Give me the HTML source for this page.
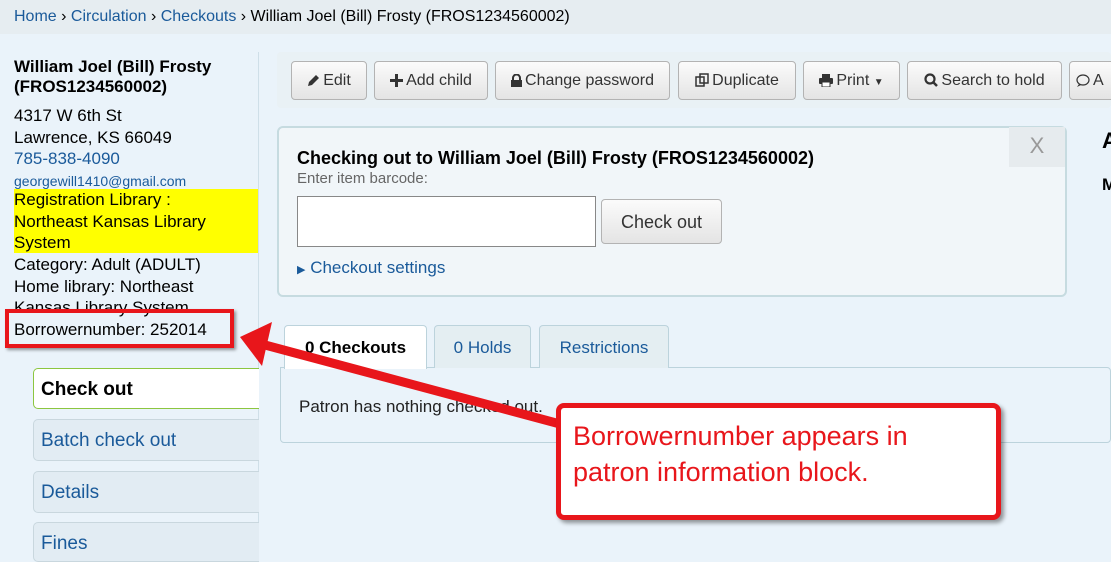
<!DOCTYPE html>
<html><head><style>
*{box-sizing:border-box;margin:0;padding:0}
body{width:1111px;height:554px;overflow:hidden;background:#eaf3fa;font-family:"Liberation Sans",Arial,sans-serif;position:relative;color:#000}
.a{position:absolute}
a,.lnk{color:#1a5a9a;text-decoration:none}
.bc{left:0;top:0;width:1111px;height:34px;background:#e6edf1;font-size:16px;padding:8px 14px;white-space:nowrap}
.pi{left:14px;font-size:17px;line-height:21.5px}
.btn{position:absolute;top:61px;height:39px;border:1px solid #b3b3b3;border-radius:4px;background:linear-gradient(#fbfbfb,#e4e4e4);font-size:16px;color:#333;padding:10px 0 0;text-align:center;white-space:nowrap}
.btn svg{vertical-align:-2px;margin-right:3px}
.tab{position:absolute;top:325px;height:43px;border:1px solid #bcd3dc;border-bottom:none;border-radius:4px 4px 0 0;background:#e4eef2;font-size:17px;padding:12px 0 0;text-align:center}
.nav{position:absolute;left:33px;width:226px;height:42px;border:1px solid #c9d7de;border-right:none;border-radius:5px 0 0 5px;background:#e2ecf3;font-size:19px;padding:10px 7px;color:#1a5a9a}
</style></head><body>
<div class="a bc"><a>Home</a> › <a>Circulation</a> › <a>Checkouts</a> › William Joel (Bill) Frosty (FROS1234560002)</div>
<div class="a" style="left:258px;top:52px;width:1px;height:502px;background:#cfdfe8"></div>
<div class="a pi" style="top:57px;font-weight:bold;font-size:17px;line-height:20px">William Joel (Bill) Frosty<br>(FROS1234560002)</div>
<div class="a pi" style="top:105px">4317 W 6th St<br>Lawrence, KS 66049<br><span class="lnk">785-838-4090</span></div>
<div class="a pi lnk" style="top:171px;font-size:14px">georgewill1410@gmail.com</div>
<div class="a pi" style="top:189px;width:244px;height:64px;background:#ffff00;line-height:21.5px">Registration Library :<br>Northeast Kansas Library<br>System</div>
<div class="a pi" style="top:254px">Category: Adult (ADULT)<br>Home library: Northeast<br>Kansas Library System<br>Borrowernumber: 252014</div>
<div class="a" style="left:5px;top:309px;width:229px;height:39px;border:4px solid #e8161b;box-shadow:2px 2px 3px rgba(0,0,0,.4)"></div>
<div class="nav" style="top:368px;background:#fff;border-color:#8cc63f;color:#000;font-weight:bold;height:41px">Check out</div>
<div class="nav" style="top:419px">Batch check out</div>
<div class="nav" style="top:471px">Details</div>
<div class="nav" style="top:522px;height:40px">Fines</div>
<div class="a" style="left:277px;top:52px;width:834px;height:56px;background:#e9f1f5;border-radius:4px"></div>
<div class="btn" style="left:291px;width:76px"><svg width="13" height="13" viewBox="0 0 13 13"><path d="M1 12l1-4 7-7 3 3-7 7z" fill="#333"/></svg>Edit</div>
<div class="btn" style="left:374px;width:114px"><svg width="13" height="13" viewBox="0 0 13 13"><path d="M5 0h3v5h5v3H8v5H5V8H0V5h5z" fill="#333"/></svg>Add child</div>
<div class="btn" style="left:495px;width:175px"><svg width="11" height="13" viewBox="0 0 11 13"><path d="M2 6V4a3.5 3.5 0 0 1 7 0v2" stroke="#333" stroke-width="2" fill="none"/><rect x="0" y="6" width="11" height="7" fill="#333"/></svg>Change password</div>
<div class="btn" style="left:678px;width:118px"><svg width="14" height="14" viewBox="0 0 14 14"><rect x="1" y="4" width="8" height="9" fill="none" stroke="#333" stroke-width="1.5"/><rect x="5" y="1" width="8" height="9" fill="none" stroke="#333" stroke-width="1.5"/></svg>Duplicate</div>
<div class="btn" style="left:803px;width:97px"><svg width="14" height="13" viewBox="0 0 14 13"><rect x="3" y="0" width="8" height="4" fill="#333"/><rect x="0" y="4" width="14" height="6" rx="1" fill="#333"/><rect x="3" y="8" width="8" height="5" fill="#fff" stroke="#333"/></svg>Print <span style="font-size:10px">▼</span></div>
<div class="btn" style="left:907px;width:155px"><svg width="14" height="14" viewBox="0 0 14 14"><circle cx="6" cy="6" r="4.5" fill="none" stroke="#333" stroke-width="2.2"/><path d="M9 9l4 4" stroke="#333" stroke-width="2.5"/></svg>Search to hold</div>
<div class="btn" style="left:1069px;width:60px;text-align:left;padding-left:6px"><svg width="14" height="13" viewBox="0 0 14 13"><ellipse cx="7" cy="6" rx="6" ry="5" fill="none" stroke="#333" stroke-width="1.2"/><path d="M3 10l-2 3 4-2" fill="#333"/></svg>A</div>
<div class="a" style="left:277px;top:126px;width:790px;height:171px;background:#f1f6f9;border:2px solid #c6dbe0;border-radius:6px"></div>
<div class="a" style="left:1009px;top:127px;width:56px;height:40px;background:#e6ebee;color:#999;font-size:22px;text-align:center;padding-top:6px">X</div>
<div class="a" style="left:297px;top:148px;font-size:18px;font-weight:bold">Checking out to William Joel (Bill) Frosty (FROS1234560002)</div>
<div class="a" style="left:297px;top:170px;font-size:15px;color:#666">Enter item barcode:</div>
<div class="a" style="left:297px;top:196px;width:299px;height:51px;background:#fff;border:1px solid #888"></div>
<div class="btn" style="left:601px;top:199px;width:121px;height:45px;font-size:18px;padding-top:12px">Check out</div>
<div class="a lnk" style="left:297px;top:258px;font-size:17px"><span style="font-size:11px">▶</span> Checkout settings</div>
<div class="a" style="left:1102px;top:128px;font-size:22px;font-weight:bold">A</div>
<div class="a" style="left:1102px;top:175px;font-size:17px;font-weight:bold">M</div>
<div class="a" style="left:280px;top:367px;width:831px;height:76px;border:1px solid #bcd3dc;border-radius:0 4px 4px 4px"></div>
<div class="tab" style="left:284px;width:143px;background:#fff;font-weight:bold;height:44px">0 Checkouts</div>
<div class="tab lnk" style="left:434px;width:97px">0 Holds</div>
<div class="tab lnk" style="left:539px;width:130px">Restrictions</div>
<div class="a" style="left:299px;top:397px;font-size:17px;color:#222">Patron has nothing checked out.</div>
<svg class="a" style="left:0;top:0" width="1111" height="554">
<line x1="560" y1="424" x2="265" y2="345" stroke="#e8161b" stroke-width="9"/>
<polygon points="240,337 272,322 262,366" fill="#e8161b"/>
</svg>
<div class="a" style="left:556px;top:403px;width:445px;height:117px;background:#fff;border:5px solid #e8161b;border-radius:8px;box-shadow:3px 3px 4px rgba(0,0,0,.4);color:#e8161b;font-size:27px;line-height:36px;padding:10px 12px">Borrowernumber appears in patron information block.</div>
</body></html>
